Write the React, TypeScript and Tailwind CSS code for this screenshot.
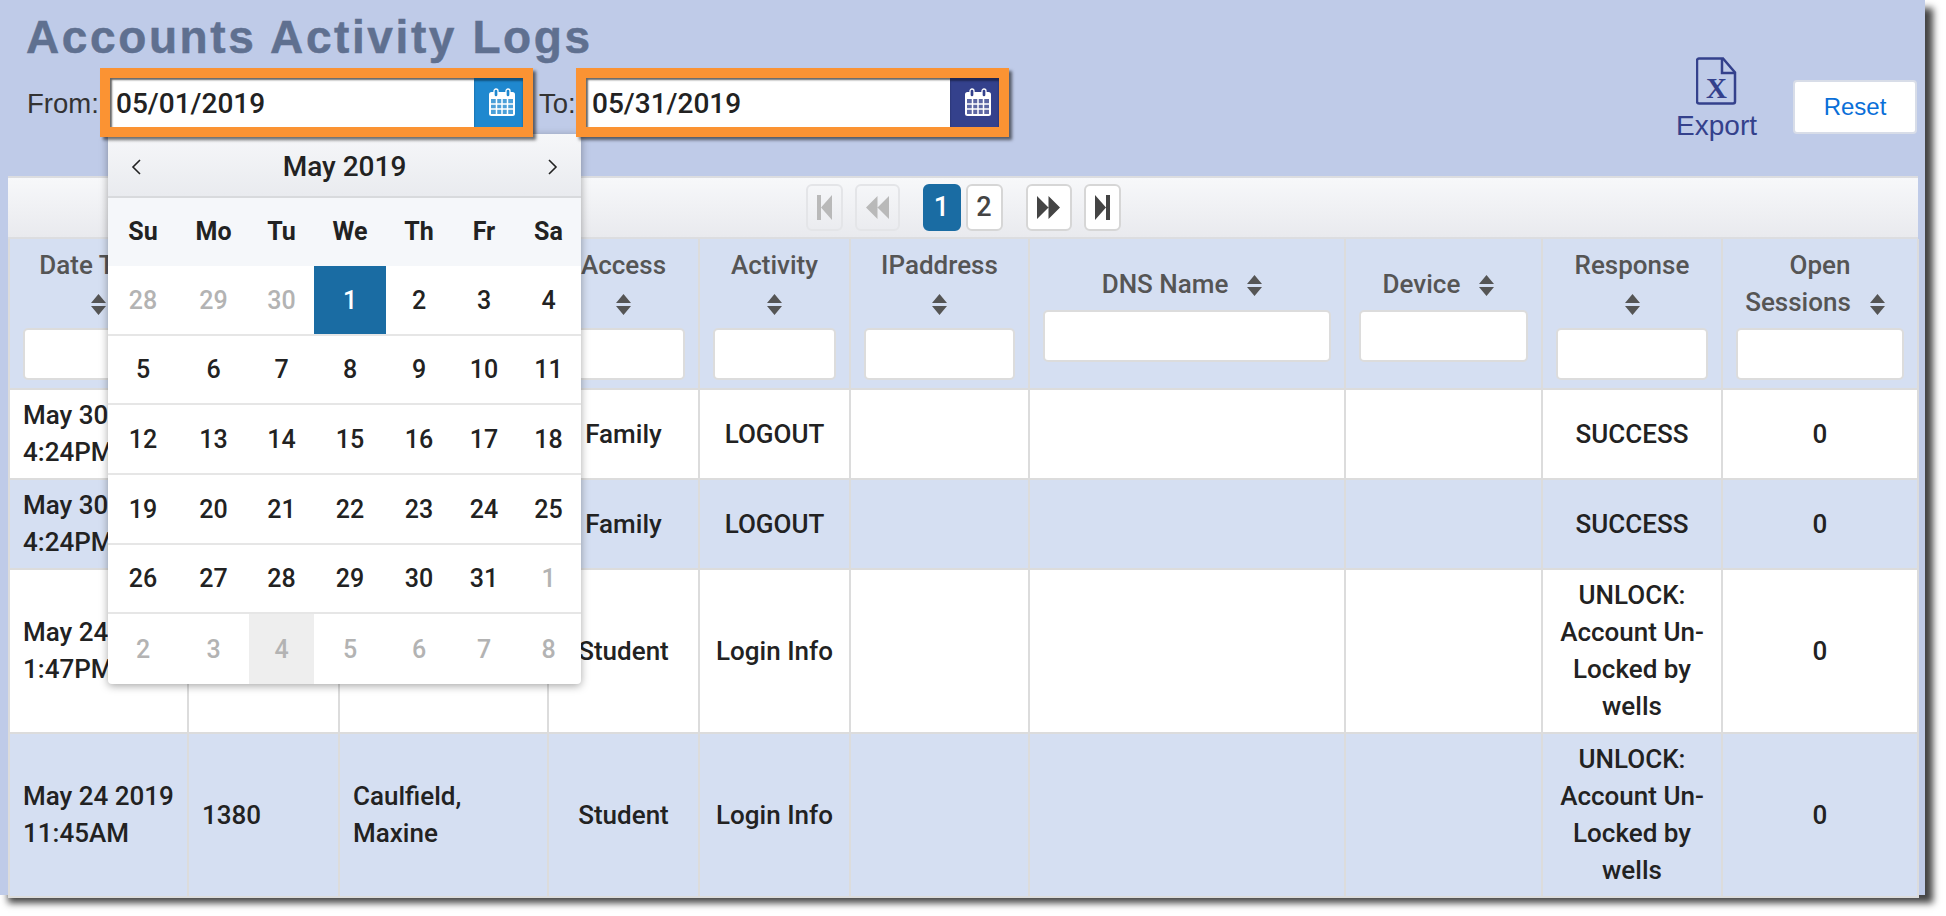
import { ReactNode } from "react";

const SortIcon = ({ className = "" }: { className?: string }) => (
  <svg width="15" height="21" viewBox="0 0 15 21" className={`inline-block align-middle ${className}`}>
    <path d="M0 9 L7.5 0 L15 9 Z M0 12 L15 12 L7.5 21 Z" fill="#555" />
  </svg>
);

const CalendarIcon = () => (
  <svg width="28" height="29" viewBox="0 0 28 29">
    <rect x="1" y="4" width="26" height="24" rx="2.5" fill="#fff" />
    <rect x="3" y="11" width="22" height="15" fill="currentColor" opacity="0.8" />
    <path d="M3 16h22M3 21h22M8.5 11v15M14 11v15M19.5 11v15" stroke="#fff" strokeWidth="1.5" />
    <rect x="6" y="1" width="4" height="8" rx="2" fill="currentColor" stroke="#fff" strokeWidth="1.3" />
    <rect x="18" y="1" width="4" height="8" rx="2" fill="currentColor" stroke="#fff" strokeWidth="1.3" />
  </svg>
);

const DateField = ({ value, color }: { value: string; color: string }) => (
  <div className="relative z-20 flex h-[69px] w-[433px] border-[10px] border-[#fb9333] shadow-[3px_3px_3px_rgba(0,0,0,0.55)]">
    <input
      readOnly
      value={value}
      className="h-full min-w-0 flex-1 bg-white pl-[6px] pt-[2px] font-['Roboto',sans-serif] text-[28px] font-medium text-[#222] shadow-[inset_2px_2px_2px_rgba(0,0,0,0.6)] outline-none"
    />
    <div className={`flex w-[49px] items-center justify-center pl-[6px] shadow-[inset_0_3px_2px_rgba(0,0,0,0.4)] ${color}`}>
      <CalendarIcon />
    </div>
  </div>
);

const days = [
  [28, 29, 30, 1, 2, 3, 4],
  [5, 6, 7, 8, 9, 10, 11],
  [12, 13, 14, 15, 16, 17, 18],
  [19, 20, 21, 22, 23, 24, 25],
  [26, 27, 28, 29, 30, 31, 1],
  [2, 3, 4, 5, 6, 7, 8],
];

const isMuted = (row: number, col: number) =>
  (row === 0 && col < 3) || (row === 4 && col === 6) || row === 5;

const CalendarPopup = () => (
  <div className="absolute left-[108px] top-[134px] z-10 w-[473px] rounded-b-[4px] bg-white font-['Roboto',sans-serif] shadow-[0_2px_8px_rgba(0,0,0,0.35)]">
    <div className="flex h-[64px] items-center justify-between border-b-2 border-[#d8dadd] bg-gradient-to-b from-[#f6f7f9] to-[#e9ebef] px-[23px] pt-[3px] text-[#222]">
      <svg width="10" height="16" viewBox="0 0 10 16" fill="none" stroke="#222" strokeWidth="1.6">
        <path d="M9 1 L2 8 L9 15" />
      </svg>
      <span className="text-[28px] font-medium">May 2019</span>
      <svg width="10" height="16" viewBox="0 0 10 16" fill="none" stroke="#222" strokeWidth="1.6">
        <path d="M1 1 L8 8 L1 15" />
      </svg>
    </div>
    <div className="grid h-[68px] grid-cols-[70px_71px_65px_72px_66px_64px_65px] items-center bg-[#f5f7fa] text-center text-[25px] font-bold text-[#222]">
      {["Su", "Mo", "Tu", "We", "Th", "Fr", "Sa"].map((d) => (
        <span key={d}>{d}</span>
      ))}
    </div>
    {days.map((week, r) => (
      <div
        key={r}
        className="grid h-[69.67px] grid-cols-[70px_71px_65px_72px_66px_64px_65px] border-b-2 border-[#e6e6e6] text-center text-[25px] font-medium last:border-b-0"
      >
        {week.map((d, c) => (
          <div
            key={c}
            className={`flex items-center justify-center pt-[1px] ${
              r === 0 && c === 3
                ? "bg-[#1a6ca3] text-white"
                : r === 5 && c === 2
                  ? "bg-[#eeeeee] text-[#b3b3b3]"
                  : isMuted(r, c)
                    ? "text-[#b3b3b3]"
                    : "text-[#222]"
            }`}
          >
            {d}
          </div>
        ))}
      </div>
    ))}
  </div>
);

const PageBtn = ({
  children,
  className = "",
}: {
  children: ReactNode;
  className?: string;
}) => (
  <div
    className={`flex h-[47px] items-center justify-center rounded-[6px] border-2 font-['Roboto',sans-serif] text-[27px] font-medium ${className}`}
  >
    {children}
  </div>
);

const Pager = () => (
  <div className="flex h-[63px] items-center justify-center border-b-2 border-t-2 border-[#dcdde0] bg-gradient-to-b from-[#f7f8fa] to-[#e9eaee]">
    <PageBtn className="w-[37px] border-[#e4e5e8]">
      <svg width="15" height="25" viewBox="0 0 15 25" fill="#b9b9b9">
        <path d="M0 0h4v25H0z M15 0v25L4 12.5z" />
      </svg>
    </PageBtn>
    <PageBtn className="ml-[12px] w-[45px] border-[#e4e5e8]">
      <svg width="23" height="23" viewBox="0 0 23 23" fill="#b9b9b9">
        <path d="M11.5 0v23L0 11.5z M23 0v23L11.5 11.5z" />
      </svg>
    </PageBtn>
    <PageBtn className="ml-[23px] w-[38px] border-[#1a6ca3] bg-[#1a6ca3] text-white">1</PageBtn>
    <PageBtn className="ml-[5px] w-[37px] border-[#d6d6d6] bg-white text-[#444]">2</PageBtn>
    <PageBtn className="ml-[23px] w-[46px] border-[#d6d6d6] bg-white">
      <svg width="23" height="23" viewBox="0 0 23 23" fill="#444">
        <path d="M0 0v23L11.5 11.5z M11.5 0v23L23 11.5z" />
      </svg>
    </PageBtn>
    <PageBtn className="ml-[12px] w-[37px] border-[#d6d6d6] bg-white">
      <svg width="15" height="25" viewBox="0 0 15 25" fill="#444">
        <path d="M11 0h4v25h-4z M0 0v25L11 12.5z" />
      </svg>
    </PageBtn>
  </div>
);

const colWidths = [179, 151, 209, 151, 151, 179, 316, 197, 180, 196];

const Th = ({ children }: { children: ReactNode }) => (
  <th className="border-2 border-t-0 border-[#dcdcdc] px-[13px] py-[8px] align-middle text-[26px] font-medium leading-[37px] text-[#555]">
    <div>{children}</div>
    <input className="mt-[7px] block h-[52px] w-full rounded-[5px] border-2 border-[#dcdcdc] bg-white" />
  </th>
);

type Row = {
  date: ReactNode;
  id?: string;
  name?: ReactNode;
  access: string;
  activity: string;
  response: string;
};

const unlock = "UNLOCK: Account Un-Locked by wells";

const rows: Row[] = [
  { date: <>May 30 2019<br />4:24PM</>, access: "Family", activity: "LOGOUT", response: "SUCCESS" },
  { date: <>May 30 2019<br />4:24PM</>, access: "Family", activity: "LOGOUT", response: "SUCCESS" },
  { date: <>May 24 2019<br />1:47PM</>, access: "Student", activity: "Login Info", response: unlock },
  {
    date: <>May 24 2019<br />11:45AM</>,
    id: "1380",
    name: <>Caulfield,<br />Maxine</>,
    access: "Student",
    activity: "Login Info",
    response: unlock,
  },
];

const tdClass = "border-2 border-[#dcdcdc] px-[13px] py-[7px] align-middle";

export default function App() {
  return (
    <div className="h-[916px] w-[1946px] overflow-hidden bg-white">
      <div className="relative flex h-[895px] w-[1925px] flex-col bg-[#bfcbe8] shadow-[8px_8px_7px_#444]">
        <CalendarPopup />

        <div className="flex h-[176px] shrink-0 justify-between pl-[26px] pr-[8px] font-['Liberation_Sans',sans-serif]">
          <div>
            <h1 className="h-[68px] pt-[12px] text-[46px] font-bold leading-[50px] tracking-[2.6px] text-[#5f7090] [-webkit-text-stroke:0.5px_#5f7090]">
              Accounts Activity Logs
            </h1>
            <div className="flex items-center text-[27.5px] text-[#333]">
              <span className="w-[74px] pl-[1px] pt-[2px]">From:</span>
              <DateField value="05/01/2019" color="bg-[#1f88cf] text-[#1f88cf]" />
              <span className="ml-[6px] w-[37px] pt-[2px]">To:</span>
              <DateField value="05/31/2019" color="bg-[#34418c] text-[#34418c]" />
            </div>
          </div>
          <div className="flex items-start gap-[36px] pt-[57px]">
            <div className="flex flex-col items-center text-[28px] leading-[34px] text-[#34418c]">
              <svg width="41" height="48" viewBox="0 0 41 48" fill="none" stroke="#34418c" strokeWidth="2.5">
                <path d="M3 1.5h24l12 14v29a2 2 0 0 1-2 2H3a2 2 0 0 1-2-2v-41a2 2 0 0 1 2-2z" />
                <path d="M26 2v14h13" />
                <text
                  x="20.5"
                  y="41"
                  textAnchor="middle"
                  fontFamily="Liberation Serif, serif"
                  fontWeight="700"
                  fontSize="29"
                  fill="#34418c"
                  stroke="none"
                >
                  X
                </text>
              </svg>
              <span className="mt-[4px]">Export</span>
            </div>
            <button className="mt-[23px] h-[54px] w-[124px] rounded-[4px] border-2 border-[#d8dde8] bg-white text-[24px] text-[#0a6fd8]">
              Reset
            </button>
          </div>
        </div>

        <div className="ml-[8px] w-[1910px] font-['Roboto',sans-serif]">
          <Pager />
          <table className="w-full table-fixed border-collapse">
            <colgroup>
              {colWidths.map((w, i) => (
                <col key={i} span={1} width={w} />
              ))}
            </colgroup>
            <thead className="bg-[#d5dff2]">
              <tr>
                <Th>
                  Date Time
                  <br />
                  <SortIcon />
                </Th>
                <Th>
                  ID
                  <br />
                  <SortIcon />
                </Th>
                <Th>
                  Name
                  <br />
                  <SortIcon />
                </Th>
                <Th>
                  Access
                  <br />
                  <SortIcon />
                </Th>
                <Th>
                  Activity
                  <br />
                  <SortIcon />
                </Th>
                <Th>
                  IPaddress
                  <br />
                  <SortIcon />
                </Th>
                <Th>
                  DNS Name
                  <SortIcon className="ml-[19px] mr-[10px]" />
                </Th>
                <Th>
                  Device
                  <SortIcon className="ml-[19px] mr-[10px]" />
                </Th>
                <Th>
                  Response
                  <br />
                  <SortIcon />
                </Th>
                <Th>
                  Open
                  <br />
                  Sessions
                  <SortIcon className="ml-[19px] mr-[10px]" />
                </Th>
              </tr>
            </thead>
            <tbody className="text-[26px] font-medium leading-[37px] text-[#222]">
              {rows.map((row, i) => (
                <tr key={i} className={i % 2 === 1 ? "bg-[#d5dff2]" : "bg-white"}>
                  <td className={`${tdClass} whitespace-nowrap`}>{row.date}</td>
                  <td className={tdClass}>{row.id}</td>
                  <td className={tdClass}>{row.name}</td>
                  <td className={`${tdClass} text-center`}>{row.access}</td>
                  <td className={`${tdClass} text-center`}>{row.activity}</td>
                  <td className={tdClass}></td>
                  <td className={tdClass}></td>
                  <td className={tdClass}></td>
                  <td className={`${tdClass} text-center`}>{row.response}</td>
                  <td className={`${tdClass} text-center`}>0</td>
                </tr>
              ))}
            </tbody>
          </table>
        </div>
      </div>
    </div>
  );
}
